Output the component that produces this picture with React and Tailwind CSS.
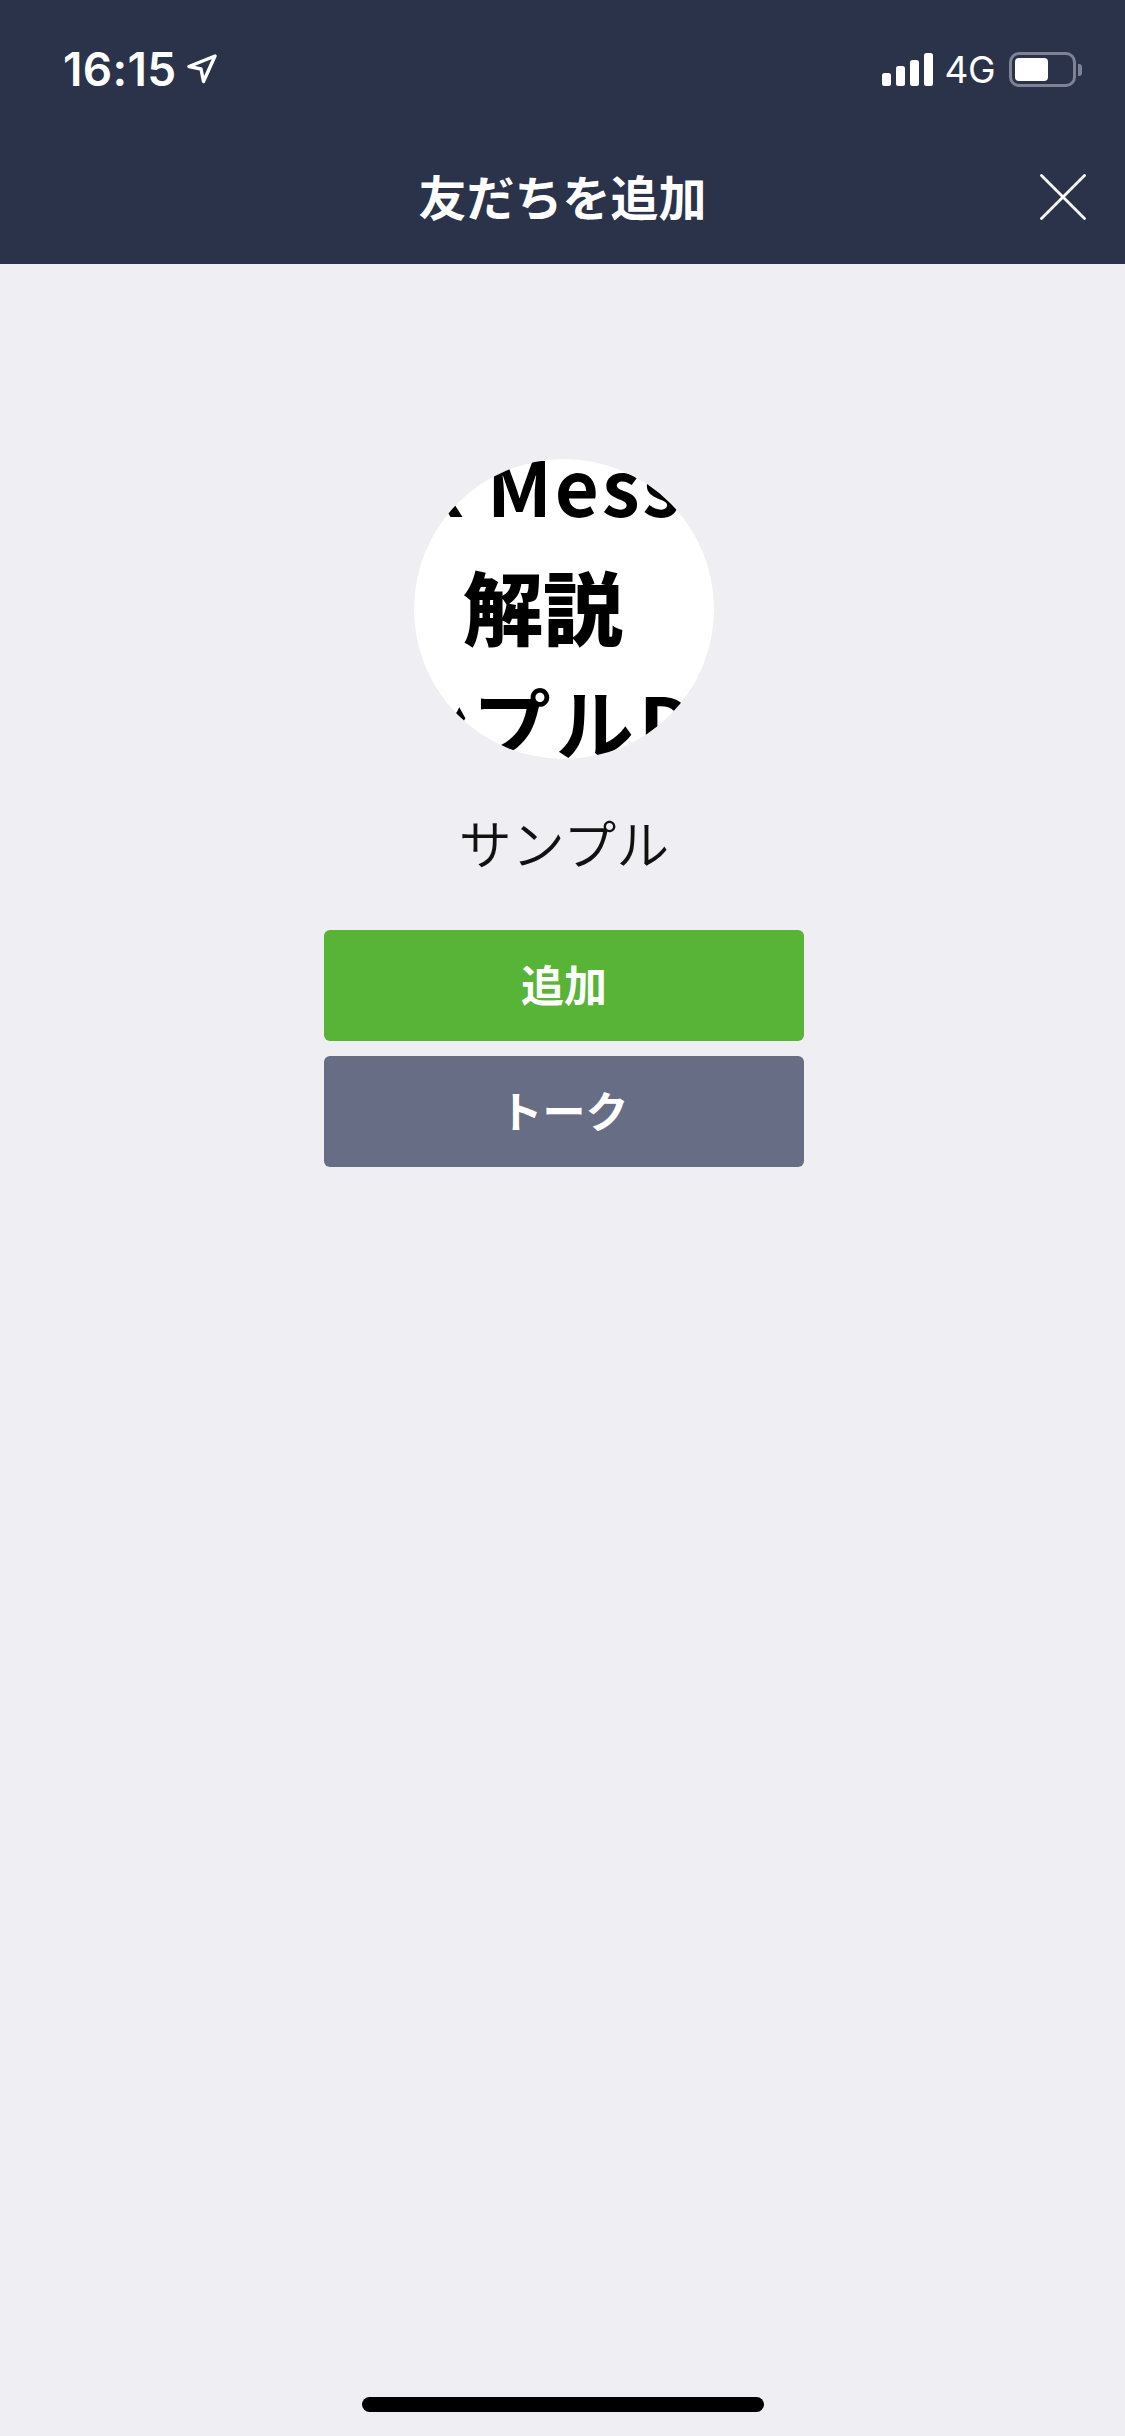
const StatusBar = () => (
  <div className="flex h-[132px] items-start justify-between pt-[52px] pl-[63px] pr-[43px]">
    <div className="flex items-center gap-[11px]">
      <span className="font-['Inter',sans-serif] text-[46px] font-semibold leading-[34px] tracking-[0.3px] text-white">
        16:15
      </span>
      <svg width="30" height="30" viewBox="0 0 30 30" fill="none">
        <path
          d="M28 2L2 12.5L14 15L16.5 27.5Z"
          stroke="white"
          strokeWidth="3.4"
          strokeLinejoin="round"
        />
      </svg>
    </div>
    <div className="flex items-center">
      <svg width="52" height="33" viewBox="0 0 52 33" fill="white">
        <rect x="0" y="20" width="9" height="13" rx="2.5" />
        <rect x="14" y="13" width="9" height="20" rx="2.5" />
        <rect x="28" y="7" width="9" height="26" rx="2.5" />
        <rect x="42" y="0" width="9" height="33" rx="2.5" />
      </svg>
      <span className="ml-[10px] font-['Inter',sans-serif] text-[37px] font-normal leading-[34px] tracking-[-0.5px] text-white">
        4G
      </span>
      <div className="ml-[14px] flex items-center">
        <div className="flex h-[35px] w-[67px] items-center rounded-[10px] border-[3px] border-[#7d8395] pl-[3px]">
          <div className="h-[23px] w-[33px] rounded-[4px] bg-white" />
        </div>
        <div className="ml-[2px] h-[12px] w-[4px] rounded-r-[3px] bg-[#7d8395]" />
      </div>
    </div>
  </div>
);

const Avatar = () => (
  <div className="flex h-[300px] w-[300px] justify-center overflow-hidden rounded-full bg-white">
    <div className="w-[236px] shrink-0 overflow-hidden whitespace-nowrap font-['Noto_Sans_CJK_JP',sans-serif] font-bold text-black">
      <div className="-ml-[72px] h-[106px] pl-[47px] text-[76px] leading-[50px] font-semibold tracking-[3px]">
        x Mess
      </div>
      <div className="ml-[17px] h-[112px] text-[80px] leading-[78px] font-black">解説</div>
      <div className="-ml-[54px] text-[78px] leading-[88px] tracking-[5px]">ンプルD</div>
    </div>
  </div>
);

export default function App() {
  return (
    <div className="flex min-h-screen flex-col bg-[#eeeef3] font-['Noto_Sans_CJK_JP',sans-serif]">
      <header className="h-[264px] bg-[#2a3349]">
        <StatusBar />
        <div className="mt-[30px] grid grid-cols-[1fr_auto_1fr] items-center">
          <div />
          <h1 className="text-[48px] font-bold leading-[66px] text-white">友だちを追加</h1>
          <div className="justify-self-end pr-[39px] pt-[3px]">
            <svg width="46" height="46" viewBox="0 0 46 46" fill="none">
              <path
                d="M1.5 1.5L44.5 44.5M44.5 1.5L1.5 44.5"
                stroke="white"
                strokeWidth="2.8"
                strokeLinecap="round"
              />
            </svg>
          </div>
        </div>
      </header>

      <main className="flex flex-1 flex-col items-center pl-[3px] pt-[195px]">
        <Avatar />
        <p className="mt-[45px] text-[53px] font-[350] leading-[76px] text-[#111111]">サンプル</p>
        <div className="mt-[50px] flex w-[480px] flex-col gap-[15px]">
          <button className="h-[111px] rounded-[6px] bg-[#57b437] pb-[4px] text-[43px] font-semibold text-white">
            追加
          </button>
          <button className="h-[111px] rounded-[6px] bg-[#666d84] pb-[4px] text-[43px] font-semibold text-white">
            トーク
          </button>
        </div>
      </main>

      <div className="flex justify-center pb-[24px]">
        <div className="h-[15px] w-[402px] rounded-full bg-black" />
      </div>
    </div>
  );
}
